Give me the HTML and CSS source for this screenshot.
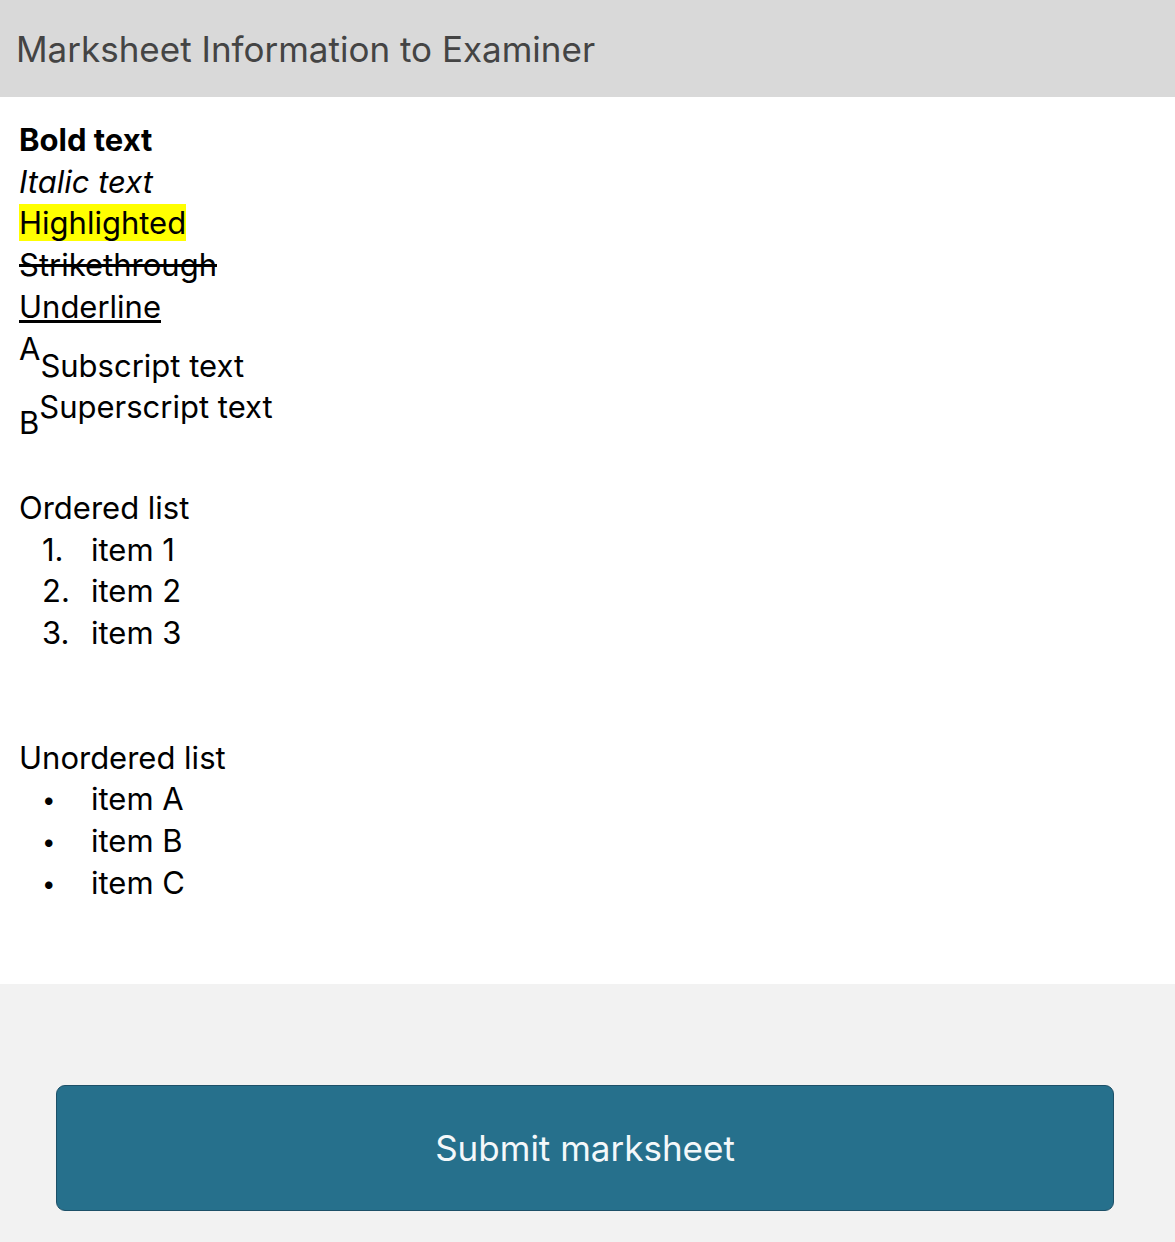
FILE: index.html
```html
<!DOCTYPE html>
<html lang="en">
<head>
    <meta charset="UTF-8">
    <meta name="viewport" content="width=device-width, initial-scale=1.0">
    <title>Marksheet Information</title>
    <link rel="stylesheet" href="styles.css">
</head>
<body>
    <header class="panel-header">
        <h2>Marksheet Information to Examiner</h2>
    </header>

    <main class="panel-body">
        <p class="rich-text">
            <strong>Bold text</strong><br>
            <em>Italic text</em><br>
            <mark>Highlighted</mark><br>
            <s>Strikethrough</s><br>
            <u>Underline</u><br>
            A<sub>Subscript text</sub><br>
            B<sup>Superscript text</sup>
        </p>

        <p class="list-title">Ordered list</p>
        <ol class="rich-list numbered">
            <li>item 1</li>
            <li>item 2</li>
            <li>item 3</li>
        </ol>

        <p class="list-title list-title-spaced">Unordered list</p>
        <ul class="rich-list bulleted">
            <li>item A</li>
            <li>item B</li>
            <li>item C</li>
        </ul>
    </main>

    <footer class="panel-footer">
        <button type="button" class="submit-btn">Submit marksheet</button>
    </footer>
</body>
</html>
```

FILE: styles.css
```css
html {
    background-color: #f2f2f2;
}

body {
    margin: 0;
    font-family: 'Inter', 'Noto Sans', sans-serif;
    color: #000;
}

.panel-header {
    background-color: #d9d9d9;
    height: 97px;
    display: flex;
    align-items: center;
    padding: 0 16px;
    box-sizing: border-box;
}

.panel-header h2 {
    margin: 0;
    font-size: 35px;
    font-weight: 400;
    color: #444;
}

.panel-body {
    background-color: #fff;
    padding: 22px 19px 80px;
    font-size: 31px;
    line-height: 41.7px;
}

.panel-body p {
    margin: 0;
}

.rich-text mark {
    background-color: #ffff00;
    color: #000;
}

/* keep sub/sup at full size, only shifted */
.rich-text sub,
.rich-text sup {
    font-size: inherit;
}

.rich-text sub {
    vertical-align: -17px;
}

.rich-text sup {
    vertical-align: 16px;
}

.panel-body .list-title {
    margin-top: 43px;
}

.panel-body .list-title-spaced {
    margin-top: 83px;
}

.rich-list {
    margin: 0;
    padding: 0 0 0 23px;
    list-style: none;
    counter-reset: item;
}

.rich-list li {
    display: flex;
    align-items: baseline;
    counter-increment: item;
}

.rich-list li::before {
    width: 49px;
    flex-shrink: 0;
}

.numbered li::before {
    content: counter(item) ".";
}

/* smaller dot, without stretching the row */
.bulleted li::before {
    content: "\2022";
    font-size: 24px;
    line-height: 0;
    position: relative;
    top: -2px;
}

.panel-footer {
    background-color: #f2f2f2;
    padding: 101px 61px 31px 56px;
}

.submit-btn {
    display: block;
    width: 100%;
    height: 126px;
    background-color: #26708c;
    border: 1px solid #1d5068;
    border-radius: 9px;
    color: #f4f8fa;
    font-family: inherit;
    font-size: 35px;
    cursor: pointer;
}

.submit-btn:hover {
    background-color: #1f6480;
}
```
